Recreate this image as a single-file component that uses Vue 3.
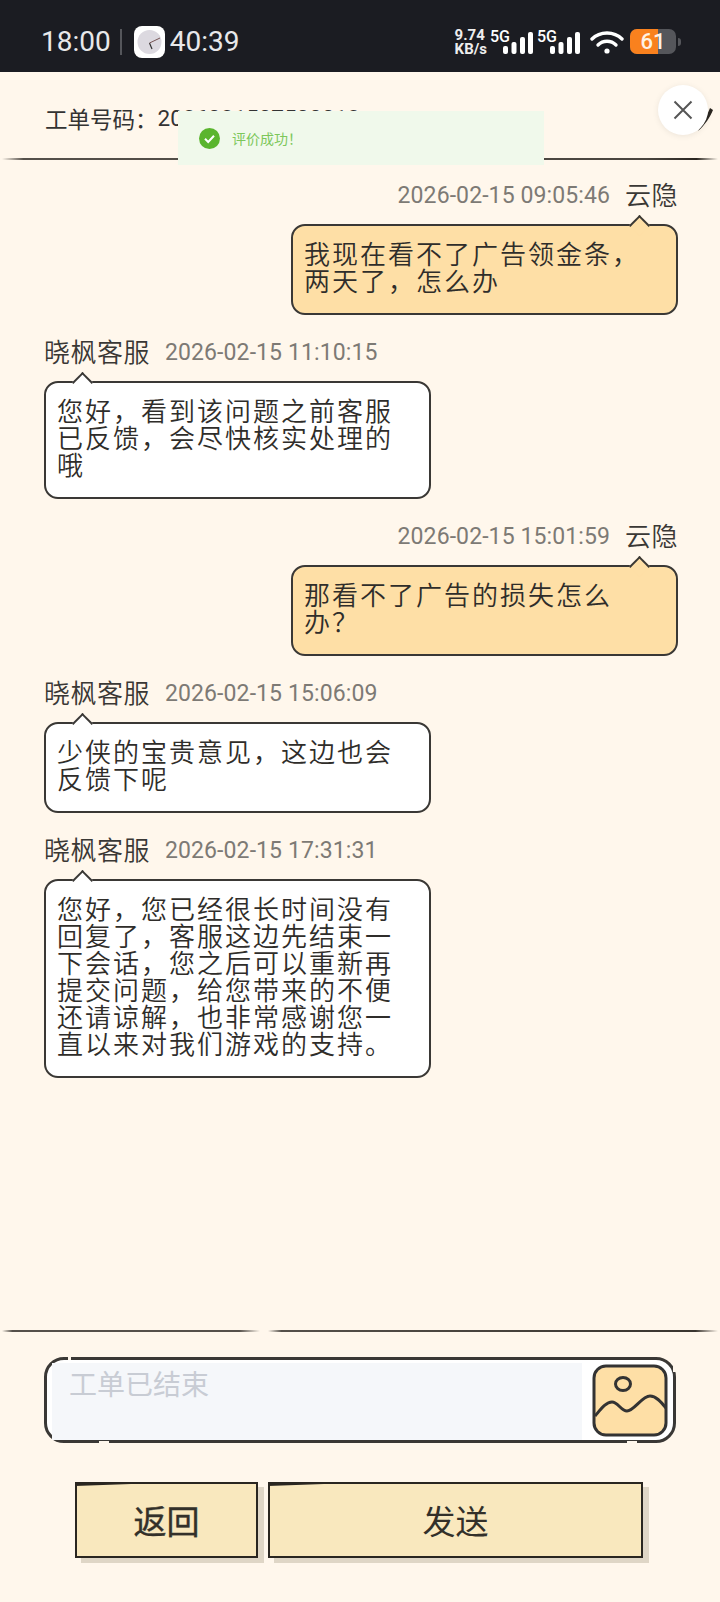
<script setup>
import { ref } from 'vue'

const messages = ref([
  { id: 1, mine: true, name: '云隐', time: '2026-02-15 09:05:46', text: '我现在看不了广告领金条\uFF0C两天了\uFF0C怎么办' },
  { id: 2, mine: false, name: '晓枫客服', time: '2026-02-15 11:10:15', text: '您好\uFF0C看到该问题之前客服已反馈\uFF0C会尽快核实处理的哦' },
  { id: 3, mine: true, name: '云隐', time: '2026-02-15 15:01:59', text: '那看不了广告的损失怎么办\uFF1F' },
  { id: 4, mine: false, name: '晓枫客服', time: '2026-02-15 15:06:09', text: '少侠的宝贵意见\uFF0C这边也会反馈下呢' },
  { id: 5, mine: false, name: '晓枫客服', time: '2026-02-15 17:31:31', text: '您好\uFF0C您已经很长时间没有回复了\uFF0C客服这边先结束一下会话\uFF0C您之后可以重新再提交问题\uFF0C给您带来的不便还请谅解\uFF0C也非常感谢您一直以来对我们游戏的支持。' },
])
const ticketLabel = '工单号码\uFF1A'
const toastText = '评价成功\uFF01'
</script>

<template>
  <div class="page">
    <!-- 状态栏 -->
    <div class="status">
      <div class="status-left">
        <span>18:00</span>
        <i class="sep"></i>
        <svg class="clock" width="31" height="32" viewBox="0 0 31 32">
          <rect width="31" height="32" rx="8" fill="#fff" />
          <circle cx="15.5" cy="16" r="12" fill="#dcd9e0" />
          <path d="M15.5 17 L18 23" stroke="#333" stroke-width="1.2" />
          <path d="M15.5 17 L26 12" stroke="#755" stroke-width="1" />
        </svg>
        <span>40:39</span>
      </div>
      <div class="status-right">
        <div class="speed">9.74<br />KB/s</div>
        <div class="sim">
          <span>5G</span>
          <svg width="30" height="22" viewBox="0 0 30 22" fill="#fff">
            <rect x="0" y="14" width="5" height="8" rx="2" />
            <rect x="8.5" y="10" width="5" height="12" rx="2" />
            <rect x="17" y="5" width="5" height="17" rx="2" />
            <rect x="25" y="0" width="5" height="22" rx="2" />
          </svg>
        </div>
        <div class="sim">
          <span>5G</span>
          <svg width="30" height="22" viewBox="0 0 30 22" fill="#fff">
            <rect x="0" y="14" width="5" height="8" rx="2" />
            <rect x="8.5" y="10" width="5" height="12" rx="2" />
            <rect x="17" y="5" width="5" height="17" rx="2" />
            <rect x="25" y="0" width="5" height="22" rx="2" />
          </svg>
        </div>
        <svg class="wifi" width="34" height="24" viewBox="0 0 34 24" fill="none" stroke="#fff" stroke-width="3.4" stroke-linecap="round">
          <path d="M2 9 C10 1 24 1 32 9" />
          <path d="M8 15 C13 10 21 10 26 15" />
          <circle cx="17" cy="21" r="2.6" fill="#fff" stroke="none" />
        </svg>
        <div class="battery">
          <div class="battery-body"><i class="battery-fill"></i><span>61</span></div>
          <i class="battery-tip"></i>
        </div>
      </div>
    </div>

    <!-- 头部 -->
    <div class="header">
      <span>{{ ticketLabel }}</span><span class="ticket-no">2026021507500012</span>
    </div>
    <div class="rule"></div>

    <!-- 会话 -->
    <div class="chat">
      <div v-for="m in messages" :key="m.id" class="msg" :class="{ mine: m.mine }">
        <div class="meta">
          <span class="name">{{ m.name }}</span>
          <span class="time">{{ m.time }}</span>
        </div>
        <div class="bubble">{{ m.text }}</div>
      </div>
    </div>

    <div class="rule rule-split"><i></i><i></i></div>

    <!-- 输入框 -->
    <div class="input-box">
      <div class="input-area">工单已结束</div>
      <svg class="pic" width="76" height="73" viewBox="0 0 76 73" fill="none" stroke="#333" stroke-width="3">
        <rect x="2" y="2" width="72" height="69" rx="12" fill="#fedfa6" />
        <ellipse cx="31" cy="20" rx="7.5" ry="6.5" />
        <path d="M3 52 C9 45 14 38 20 38 C26 38 29 47 35 47 C42 47 50 32 58 32 C64 32 69 38 74 44" />
      </svg>
      <i class="nick nick-top"></i>
      <i class="nick nick-bottom"></i>
      <i class="nick nick-right"></i>
      <i class="nick nick-low"></i>
    </div>

    <!-- 按钮 -->
    <div class="actions">
      <button class="btn btn-back">返回</button>
      <button class="btn btn-send">发送</button>
    </div>

    <!-- 提示 -->
    <div class="toast">
      <svg width="21" height="21" viewBox="0 0 21 21">
        <circle cx="10.5" cy="10.5" r="10.5" fill="#5ab52e" />
        <path d="M6 10.8 L9.2 14 L15 7.8" fill="none" stroke="#fff" stroke-width="2" />
      </svg>
      <span>{{ toastText }}</span>
    </div>

    <!-- 关闭 -->
    <svg class="scratch" width="17" height="25" viewBox="0 0 17 25" fill="#2a2620">
      <path d="M13 1 L16 3 C13 10 8 18 1 24 C6 16 10 9 13 1 Z" />
    </svg>
    <div class="close">
      <svg width="20" height="20" viewBox="0 0 20 20" fill="none" stroke="#555" stroke-width="2">
        <path d="M1.5 1.5 L18.5 18.5 M18.5 1.5 L1.5 18.5" />
      </svg>
    </div>
  </div>
</template>

<style>
body {
  margin: 0;
  background: #fff7ec;
}
</style>

<style scoped>
.page {
  position: relative;
  width: 720px;
  height: 1602px;
  display: flex;
  flex-direction: column;
  overflow: hidden;
  background: #fff7ec;
  color: #333;
  font-family: Roboto, "Noto Sans CJK SC", sans-serif;
}

.status {
  height: 72px;
  flex: none;
  box-sizing: border-box;
  display: flex;
  justify-content: space-between;
  align-items: center;
  padding: 11px 39px 0 41px;
  background: #1b1c22;
  color: #e8e8ea;
}

.status-left {
  display: flex;
  align-items: center;
  font-size: 28px;
}

.sep {
  width: 2px;
  height: 26px;
  margin: 0 12px 0 9px;
  background: #55565b;
}

.clock {
  margin-right: 5px;
}

.status-right {
  display: flex;
  align-items: center;
  color: #fff;
}

.speed {
  margin-right: 3px;
  font-size: 15px;
  font-weight: 700;
  line-height: 14px;
  color: #eee;
}

.sim {
  display: flex;
  align-items: flex-end;
  margin-right: 4px;
  height: 24px;
  font-size: 16px;
  font-weight: 500;
}

.sim span {
  align-self: flex-start;
  margin-right: -7px;
  line-height: 13px;
}

.wifi {
  margin: 0 6px 0 6px;
}

.battery {
  display: flex;
  align-items: center;
}

.battery-body {
  position: relative;
  width: 46px;
  height: 25px;
  border-radius: 7px;
  overflow: hidden;
  background: #55565b;
  text-align: center;
}

.battery-fill {
  position: absolute;
  left: 0;
  top: 0;
  bottom: 0;
  width: 28px;
  background: #f9811e;
}

.battery-body span {
  position: relative;
  font-size: 22px;
  font-weight: 500;
  line-height: 25px;
  color: #fff2e4;
}

.battery-tip {
  width: 3px;
  height: 8px;
  margin-left: 2px;
  background: #55565b;
  border-radius: 0 3px 3px 0;
}

.header {
  height: 86px;
  flex: none;
  display: flex;
  align-items: center;
  padding: 6px 0 0 45px;
  box-sizing: border-box;
  font-size: 22.5px;
}

.rule {
  flex: none;
  height: 2px;
  margin: 0 2px;
  background: linear-gradient(90deg, #fff7ec, #55504a 3%, #4a453f 90%, #2a2620 97%, #fff7ec);
}

.rule-split {
  display: flex;
  gap: 8px;
  background: none;
}

.rule-split i {
  height: 2px;
  background: linear-gradient(90deg, #fff7ec, #55504a 4%, #55504a 92%, #fff7ec);
}

.rule-split i:first-child {
  width: 258px;
}

.rule-split i:last-child {
  flex: 1;
  background: linear-gradient(90deg, #fff7ec, #55504a 3%, #3a352f 95%, #fff7ec);
}

.chat {
  flex: 1;
  display: flex;
  flex-direction: column;
  padding: 20px 42px 0 44px;
  gap: 22px;
  min-height: 0;
}

.msg {
  display: flex;
  flex-direction: column;
  align-items: flex-start;
}

.msg.mine {
  align-items: flex-end;
}

.meta {
  display: flex;
  align-items: center;
  gap: 15px;
  height: 30px;
  margin-bottom: 14px;
}

.mine .meta {
  flex-direction: row-reverse;
}

.name {
  margin-top: -3px;
  font-size: 26px;
  font-weight: 350;
  letter-spacing: 0.5px;
  color: #3a3835;
}

.time {
  font-size: 23px;
  letter-spacing: 0.1px;
  color: #7d7a75;
}

.bubble {
  position: relative;
  width: 387px;
  box-sizing: border-box;
  padding: 16px 12px 17px 11px;
  border: 2px solid #3a3835;
  border-radius: 14px;
  background: #fff;
  font-size: 26px;
  font-weight: 350;
  letter-spacing: 2px;
  line-height: 27px;
  color: #2f2d2a;
}

.bubble::before {
  content: "";
  position: absolute;
  top: -8px;
  left: 29px;
  width: 13px;
  height: 13px;
  border-top: 2px solid #3a3835;
  border-left: 2px solid #3a3835;
  background: inherit;
  transform: rotate(45deg);
}

.mine .bubble {
  background: #fedfa6;
}

.mine .bubble::before {
  left: auto;
  right: 29px;
}

.input-box {
  position: relative;
  flex: none;
  display: flex;
  align-items: center;
  justify-content: space-between;
  margin: 25px 44px 0;
  height: 86px;
  box-sizing: border-box;
  padding: 0 5px;
  border: 3px solid #3a3835;
  border-radius: 20px;
  background: #fff;
}

.input-area {
  align-self: flex-end;
  width: 530px;
  height: 77px;
  box-sizing: border-box;
  padding: 0 17px;
  background: #f5f7fa;
  font-size: 28px;
  color: #c8ccd4;
}

.pic {
  flex: none;
}

/* 手绘边框的小缺口 */
.nick {
  position: absolute;
  background: #fff7ec;
}

.nick-top {
  left: 21px;
  top: -3px;
  width: 3px;
  height: 3px;
}

.nick-bottom {
  left: 52px;
  bottom: -3px;
  width: 10px;
  height: 2px;
}

.nick-right {
  right: -3px;
  top: 6px;
  width: 3px;
  height: 6px;
}

.nick-low {
  right: 36px;
  bottom: -3px;
  width: 10px;
  height: 2px;
}

.actions {
  flex: none;
  display: flex;
  gap: 10px;
  margin: 39px 0 44px 75px;
}

.btn {
  position: relative;
  height: 76px;
  padding: 0;
  border: 2px solid #2a2620;
  background: #f9e8be;
  box-shadow: 6px 5px 0 #dfd6c6;
  font-family: inherit;
  font-size: 33px;
  color: #33302a;
}

.btn::before {
  content: "";
  position: absolute;
  left: -2px;
  top: -2px;
  width: 70px;
  height: 4px;
  background: #2a2620;
  clip-path: polygon(0 0, 100% 0, 100% 40%, 0 100%);
}

.btn-back {
  width: 183px;
  -webkit-text-stroke: 0.4px #33302a;
}

.btn-send {
  width: 375px;
}

.toast {
  position: absolute;
  left: 178px;
  top: 111px;
  width: 366px;
  height: 54px;
  box-sizing: border-box;
  display: flex;
  align-items: center;
  gap: 12px;
  padding-left: 21px;
  background: #f0f9eb;
  font-size: 14px;
  color: #7cc75a;
}

.scratch {
  position: absolute;
  left: 697px;
  top: 107px;
}

.close {
  position: absolute;
  left: 658px;
  top: 85px;
  width: 50px;
  height: 50px;
  display: flex;
  align-items: center;
  justify-content: center;
  border-radius: 50%;
  background: #fff;
  box-shadow: 0 1px 6px rgba(0, 0, 0, 0.08);
}
</style>
